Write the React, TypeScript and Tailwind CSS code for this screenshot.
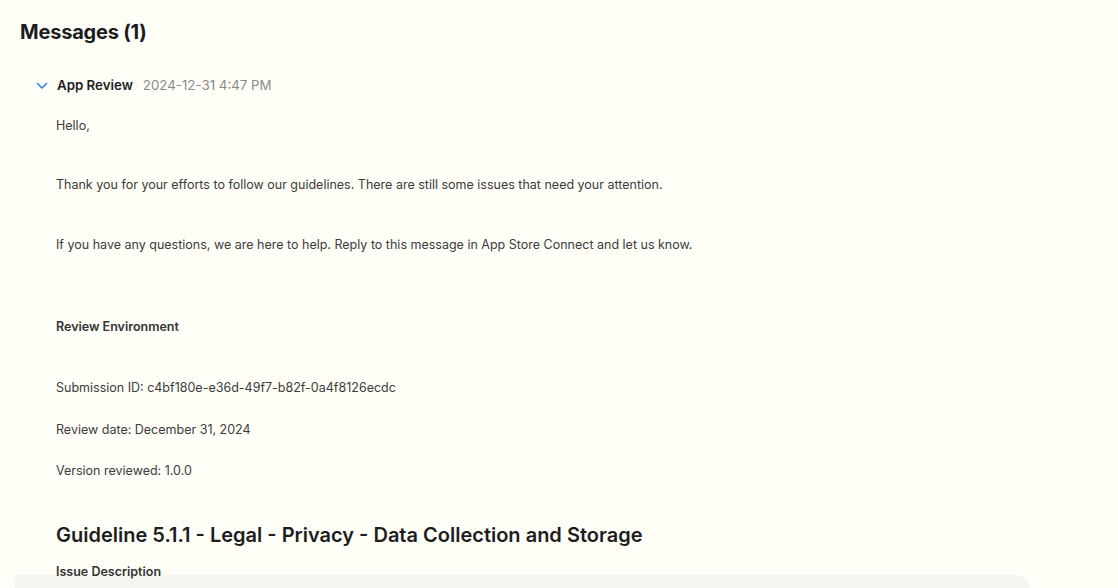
export default function App() {
  const body = "text-[12.5px] leading-[18px] text-[#3c3c3c]";
  return (
    <div
      className="relative h-[588px] w-full overflow-hidden bg-[#fffef7]"
      style={{ fontFamily: "Inter, 'Liberation Sans', Arial, sans-serif" }}
    >
      <div className="absolute left-[15px] top-[575px] h-[40px] w-[1015px] rounded-tr-[14px] rounded-tl-[4px] bg-[#f4f7f0]" />
      <div className="relative z-10 flex flex-col pl-[20px] pt-[20px]">
        <h1 className="text-[20px] leading-[25px] font-bold text-[#1d1d1f] tracking-[-0.2px]">Messages (1)</h1>
        <div className="mt-[31px] ml-[16px] flex h-[20px] items-center">
          <svg width="12" height="8" viewBox="0 0 12 8" className="mr-[9px]">
            <path d="M1.5 1.5 L6 6 L10.5 1.5" fill="none" stroke="#3a7cf0" strokeWidth="1.6" strokeLinecap="round" strokeLinejoin="round" />
          </svg>
          <span className="text-[13.3px] font-semibold text-[#1d1d1f]">App Review</span>
          <span className="ml-[10px] text-[13.3px] text-[#8a8a8a]">2024-12-31 4:47 PM</span>
        </div>
        <div className="ml-[36px] flex flex-col">
          <p className={`${body} mt-[21px]`}>Hello,</p>
          <p className={`${body} mt-[41px]`}>
            Thank you for your efforts to follow our guidelines. There are still some issues that need your attention.
          </p>
          <p className={`${body} mt-[42px]`}>
            If you have any questions, we are here to help. Reply to this message in App Store Connect and let us know.
          </p>
          <p className={`${body} mt-[64px] font-semibold text-[#333]`}>Review Environment</p>
          <p className={`${body} mt-[43px]`}>Submission ID: c4bf180e-e36d-49f7-b82f-0a4f8126ecdc</p>
          <p className={`${body} mt-[24px]`}>Review date: December 31, 2024</p>
          <p className={`${body} mt-[23px]`}>Version reviewed: 1.0.0</p>
          <h2 className="mt-[41px] text-[20px] leading-[28px] font-semibold text-[#1d1d1f]">
            Guideline 5.1.1 - Legal - Privacy - Data Collection and Storage
          </h2>
          <p className={`${body} mt-[14px] font-semibold text-[#333]`}>Issue Description</p>
        </div>
      </div>
    </div>
  );
}
